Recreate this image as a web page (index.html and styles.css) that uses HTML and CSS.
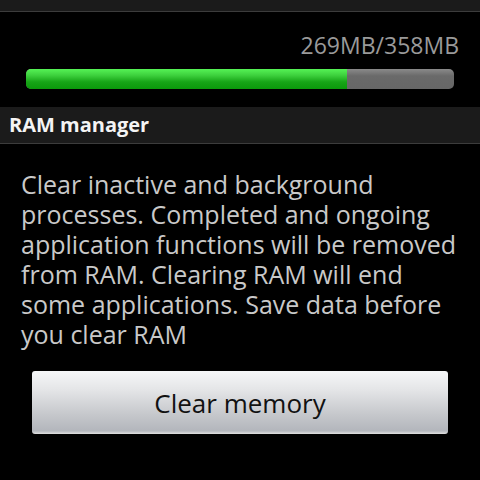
FILE: index.html
```html
<!DOCTYPE html>
<html>
<head>
<meta charset="utf-8">
<link rel="stylesheet" href="styles.css">
</head>
<body>
<div class="screen">
  <div class="topbar"></div>
  <div class="usage">
    <div class="usage-text">269MB/358MB</div>
    <div class="bar"><div class="bar-fill" style="width:75.1%"></div></div>
  </div>
  <div class="section-header">RAM manager</div>
  <p class="desc">Clear inactive and background processes. Completed and ongoing application functions will be removed from RAM. Clearing RAM will end some applications. Save data before you clear RAM</p>
  <div class="btn-wrap"><button class="btn">Clear memory</button></div>
</div>
</body>
</html>
```
FILE: styles.css
```css
html, body {
  margin: 0;
  padding: 0;
  background: #000;
}
.screen {
  width: 480px;
  height: 480px;
  overflow: hidden;
  background: #000;
  font-family: "Open Sans", "DejaVu Sans", sans-serif;
}
.topbar {
  height: 11px;
  background: #1b1b1b;
  border-bottom: 1px solid #3c3c3c;
}
.usage {
  padding: 21px 26px 18px 26px;
}
.usage-text {
  text-align: right;
  color: #9a9a9a;
  font-size: 23px;
  line-height: 24px;
  margin-right: -5px;
  margin-bottom: 12px;
}
.bar {
  height: 20px;
  border-radius: 5px;
  overflow: hidden;
  background: linear-gradient(#8a8a8a, #6a6a6a 35%, #676767);
}
.bar-fill {
  height: 100%;
  background: linear-gradient(#55f255, #3fd23f 30%, #17a517 65%, #0b990b);
}
.section-header {
  background: #1b1b1b;
  border-bottom: 1px solid #3c3c3c;
  color: #f4f4f4;
  font-weight: bold;
  font-size: 20px;
  height: 36px;
  line-height: 36px;
  padding-left: 9px;
}
.desc {
  margin: 0;
  padding: 25px 10px 0 21px;
  color: #c9c9c9;
  font-size: 25px;
  line-height: 30px;
}
.btn-wrap {
  padding: 22px 32px 0 32px;
}
.btn {
  display: block;
  width: 100%;
  height: 63px;
  border: none;
  border-radius: 3px;
  background: linear-gradient(#f6f7f8, #e4e5e7 30%, #c5c7cb 70%, #b3b6bc 95%, #e0e0e0);
  color: #111;
  font-family: "Open Sans", "DejaVu Sans", sans-serif;
  font-size: 26px;
  padding: 0;
}
```
